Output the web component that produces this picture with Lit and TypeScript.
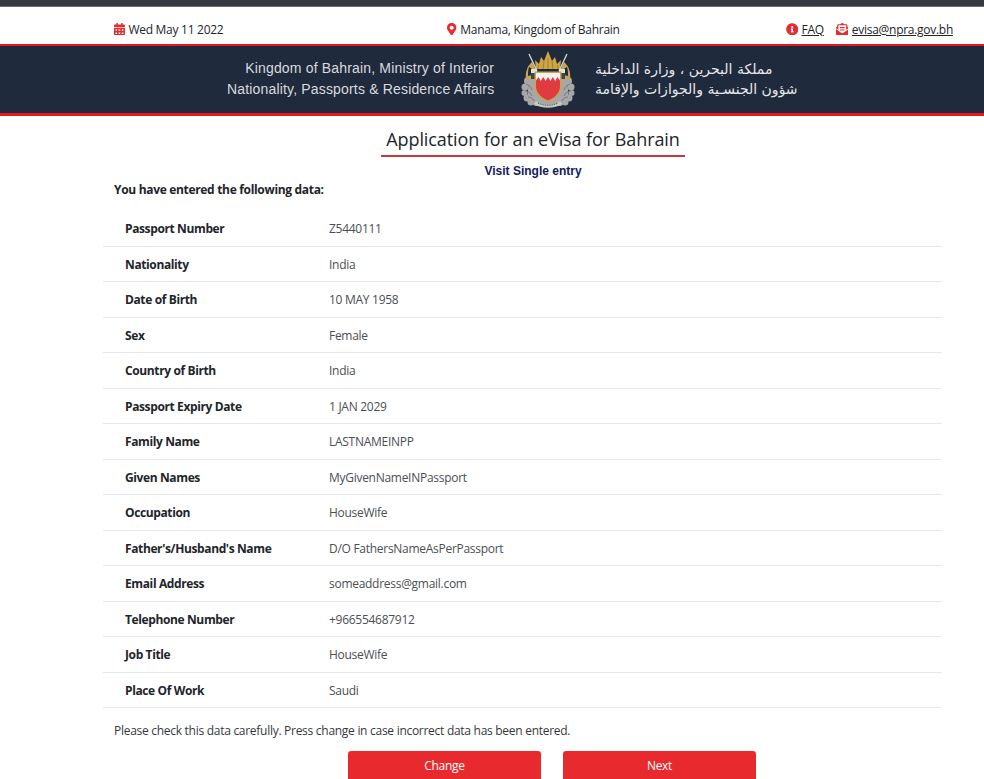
import { LitElement, html, css, svg } from "lit";
import { customElement } from "lit/decorators.js";

const rows: [string, string][] = [
  ["Passport Number", "Z5440111"],
  ["Nationality", "India"],
  ["Date of Birth", "10 MAY 1958"],
  ["Sex", "Female"],
  ["Country of Birth", "India"],
  ["Passport Expiry Date", "1 JAN 2029"],
  ["Family Name", "LASTNAMEINPP"],
  ["Given Names", "MyGivenNameINPassport"],
  ["Occupation", "HouseWife"],
  ["Father's/Husband's Name", "D/O FathersNameAsPerPassport"],
  ["Email Address", "someaddress@gmail.com"],
  ["Telephone Number", "+966554687912"],
  ["Job Title", "HouseWife"],
  ["Place Of Work", "Saudi"],
];

const calendar = svg`<path d="M0 464c0 26.5 21.5 48 48 48h352c26.5 0 48-21.5 48-48V192H0v272zm320-196c0-6.6 5.4-12 12-12h40c6.6 0 12 5.4 12 12v40c0 6.6-5.4 12-12 12h-40c-6.6 0-12-5.4-12-12v-40zm0 128c0-6.6 5.4-12 12-12h40c6.6 0 12 5.4 12 12v40c0 6.6-5.4 12-12 12h-40c-6.6 0-12-5.4-12-12v-40zM192 268c0-6.6 5.4-12 12-12h40c6.6 0 12 5.4 12 12v40c0 6.6-5.4 12-12 12h-40c-6.6 0-12-5.4-12-12v-40zm0 128c0-6.6 5.4-12 12-12h40c6.6 0 12 5.4 12 12v40c0 6.6-5.4 12-12 12h-40c-6.6 0-12-5.4-12-12v-40zM64 268c0-6.6 5.4-12 12-12h40c6.6 0 12 5.4 12 12v40c0 6.6-5.4 12-12 12H76c-6.6 0-12-5.4-12-12v-40zm0 128c0-6.6 5.4-12 12-12h40c6.6 0 12 5.4 12 12v40c0 6.6-5.4 12-12 12H76c-6.6 0-12-5.4-12-12v-40zM400 64h-48V16c0-8.8-7.2-16-16-16h-32c-8.8 0-16 7.2-16 16v48H160V16c0-8.8-7.2-16-16-16h-32c-8.8 0-16 7.2-16 16v48H48C21.5 64 0 85.5 0 112v48h448v-48c0-26.5-21.5-48-48-48z"/>`;
const marker = svg`<path d="M172.268 501.67C26.97 291.031 0 262.562 0 192 0 85.961 85.961 0 192 0s192 85.961 192 192c0 70.562-26.97 99.031-172.268 309.67-9.535 13.774-29.93 13.773-39.464 0zM192 272c44.183 0 80-35.817 80-80s-35.817-80-80-80-80 35.817-80 80 35.817 80 80 80z"/>`;
const info = svg`<path d="M256 8C119.043 8 8 119.083 8 256c0 136.997 111.043 248 248 248s248-111.003 248-248C504 119.083 392.957 8 256 8zm0 110c23.196 0 42 18.804 42 42s-18.804 42-42 42-42-18.804-42-42 18.804-42 42-42zm56 254c0 6.627-5.373 12-12 12h-88c-6.627 0-12-5.373-12-12v-24c0-6.627 5.373-12 12-12h12v-64h-12c-6.627 0-12-5.373-12-12v-24c0-6.627 5.373-12 12-12h64c6.627 0 12 5.373 12 12v100h12c6.627 0 12 5.373 12 12v24z"/>`;
const envelope = svg`<path d="M176 216h160c8.84 0 16-7.16 16-16v-16c0-8.84-7.16-16-16-16H176c-8.84 0-16 7.16-16 16v16c0 8.84 7.16 16 16 16zm-16 80c0 8.84 7.16 16 16 16h160c8.84 0 16-7.16 16-16v-16c0-8.84-7.16-16-16-16H176c-8.84 0-16 7.16-16 16v16zm96 121.13c-16.42 0-32.84-5.06-46.86-15.19L0 250.86V464c0 26.51 21.49 48 48 48h416c26.51 0 48-21.49 48-48V250.86L302.86 401.94c-14.02 10.12-30.44 15.19-46.86 15.19zm237.61-254.18c-8.85-6.94-17.24-13.47-29.61-22.81V96c0-26.51-21.49-48-48-48h-77.55c-3.04-2.2-5.87-4.26-9.04-6.56C312.6 29.17 279.2-.35 256 0c-23.2-.35-56.59 29.17-73.41 41.44-3.17 2.3-6 4.36-9.04 6.56H96c-26.51 0-48 21.49-48 48v44.14c-12.37 9.33-20.76 15.87-29.61 22.81A47.995 47.995 0 0 0 0 200.72v10.65l96 69.35V96h320v184.72l96-69.35v-10.65c0-14.74-6.78-28.67-18.39-37.77z"/>`;

const emblem = svg`
  <svg class="emblem" viewBox="0 0 54 58" aria-hidden="true">
    <g fill="#a6a7a6">
      <circle cx="7" cy="30" r="4"/><circle cx="4" cy="36" r="3.500"/><circle cx="3.500" cy="42" r="3"/><circle cx="6" cy="47" r="3.500"/><circle cx="10" cy="51" r="3.500"/>
      <circle cx="47" cy="30" r="4"/><circle cx="50" cy="36" r="3.500"/><circle cx="50.500" cy="42" r="3"/><circle cx="48" cy="47" r="3.500"/><circle cx="44" cy="51" r="3.500"/>
      <path d="M8 27h38l2 22-8 6H14l-8-6z"/>
    </g>
    <g fill="none" stroke="#6d7076" stroke-width="0.800">
      <path d="M5 33c3 1 5 3 6 6M4 40c3 0 6 2 7 5M7 46c2 0 5 1 6 4"/>
      <path d="M49 33c-3 1-5 3-6 6M50 40c-3 0-6 2-7 5M47 46c-2 0-5 1-6 4"/>
    </g>
    <path d="M11 11C6 15 4 22 5 29l7-1 4-6z" fill="#c9a650"/>
    <path d="M43 11c5 4 7 11 6 18l-7-1-4-6z" fill="#c9a650"/>
    <path d="M8 16c-1 3-1 6-1 9l4-1 2-5z" fill="#1f2a3d"/>
    <path d="M46 16c1 3 1 6 1 9l-4-1-2-5z" fill="#1f2a3d"/>
    <path d="M15 18l-1-9 4 4 2-7 3 4 4-10 4 10 3-4 2 7 4-4-1 9z" fill="#cfa644"/>
    <path d="M17 18l.500-4M22 18l1-8M27 18V7M32 18l-1-8M37 18l-.500-4" stroke="#8a6d26" stroke-width="0.700" fill="none"/>
    <path d="M8 3l8 17M46 3L38 20" stroke="#d2d2cf" stroke-width="1.400" fill="none"/>
    <path d="M10 18h6v4h-6zM38 18h6v4h-6z" fill="#e2e2dd"/>
    <path d="M10 22h5v6h-5zM39 22h5v6h-5z" fill="#3f454f"/>
    <path d="M13.500 20.500h27v14.500c0 8-6 13-13.500 16-7.500-3-13.500-8-13.500-16z" fill="#c9a650"/>
    <path d="M15 22h24v13c0 7-5 11.500-12 14.500-7-3-12-7.500-12-14.500z" fill="#df3b41"/>
    <path d="M15 22h24v7.500l-2.400-3.500-2.400 4-2.400-4-2.400 4-2.400-4-2.400 4-2.400-4-2.400 4-2.400-4-2.400 3.500z" fill="#f7f2ef"/>
    <path d="M15 50c6 5 18 5 24 0l2 3c-7 5-21 5-28 0z" fill="#c7c7c4"/>
    <path d="M17 52c6 3 14 3 20 0" stroke="#3b3f46" stroke-width="0.800" stroke-dasharray="1.500 .8" fill="none"/>
  </svg>`;

@customElement("app-root")
export class AppRoot extends LitElement {
  static styles = css`
    :host {
      display: block;
      height: 779px;
      overflow: hidden;
      background: #fff;
      color: #212529;
      font-family: "Open Sans", "Noto Sans", sans-serif;
      font-size: 12px;
      letter-spacing: -0.28px;
    }
    .chrome {
      height: 7px;
      background: #343a40;
      box-shadow: inset 0 -1px 0 #6b6e72;
    }
    .topbar {
      height: 37px;
      margin: 0 31px 0 114px;
      display: grid;
      grid-template-columns: 1fr auto 1fr;
      align-items: center;
      padding-top: 7px;
      box-sizing: border-box;
    }
    .item {
      display: inline-flex;
      align-items: center;
      gap: 3.5px;
    }
    .right {
      justify-self: end;
      display: flex;
      gap: 12px;
    }
    .ico {
      height: 12.5px;
      fill: #e62c2f;
      display: block;
    }
    a {
      color: #212529;
      text-decoration: underline;
    }
    .banner {
      height: 67px;
      background: #1f2a3d;
      border-top: 2px solid #e5161c;
      border-bottom: 3px solid #e5161c;
      display: flex;
      align-items: center;
      padding-left: 227px;
    }
    .en {
      width: 267px;
      text-align: right;
      font-family: "Liberation Sans", Arial, sans-serif;
      font-size: 14px;
      letter-spacing: 0.17px;
      line-height: 21px;
      color: #d9dade;
      white-space: nowrap;
      margin-top: -2px;
    }
    .emblem {
      width: 54px;
      height: 58px;
      margin: 0 20px 0 27px;
      flex: none;
    }
    .ar {
      font-family: "DejaVu Sans", sans-serif;
      font-size: 14px;
      letter-spacing: 0;
      line-height: 20px;
      color: #e6e6e8;
      text-align: left;
      white-space: nowrap;
      margin-top: -2px;
    }
    .main {
      padding: 0 42px 0 103px;
    }
    .head {
      width: 304px;
      margin: 8px 0 0 278px;
    }
    h1 {
      margin: 0;
      font-size: 18px;
      font-weight: 400;
      letter-spacing: -0.08px;
      line-height: 30px;
      padding-bottom: 1px;
      text-align: center;
      color: #212529;
      border-bottom: 2px solid #c8373b;
      white-space: nowrap;
    }
    .sub {
      margin: 6px 0 0;
      text-align: center;
      font-family: "Liberation Sans", Arial, sans-serif;
      font-weight: 700;
      font-size: 12px;
      letter-spacing: 0;
      line-height: 16px;
      color: #10205a;
      white-space: nowrap;
    }
    .lead {
      margin: 2px 0 0 11px;
      font-weight: 700;
      letter-spacing: -0.32px;
      line-height: 17px;
      color: #212529;
    }
    .table {
      margin-top: 13px;
    }
    .row {
      height: 35.5px;
      box-sizing: border-box;
      border-bottom: 1px solid #e6e7e8;
      padding-top: 1px;
      display: grid;
      grid-template-columns: 226px 1fr;
      align-items: center;
    }
    .k {
      padding-left: 22px;
      font-weight: 700;
      letter-spacing: -0.38px;
    }
    .v {
      color: #4a4f54;
    }
    .note {
      margin: 14px 0 0 11px;
      line-height: 17px;
      color: #34393e;
    }
    .actions {
      display: flex;
      gap: 22px;
      margin-top: 12px;
      padding-left: 245px;
    }
    button {
      width: 193px;
      height: 34px;
      border: 0;
      border-radius: 3px;
      background: #e82a2e;
      color: #fff;
      font: inherit;
      letter-spacing: inherit;
      padding: 0 0 6px;
    }
  `;

  render() {
    return html`
      <div class="chrome"></div>
      <div class="topbar">
        <span class="item"><svg class="ico" viewBox="0 0 448 512">${calendar}</svg>Wed May 11 2022</span>
        <span class="item"><svg class="ico" viewBox="0 0 384 512">${marker}</svg>Manama, Kingdom of Bahrain</span>
        <div class="right">
          <span class="item"><svg class="ico" viewBox="0 0 512 512">${info}</svg><a href="#">FAQ</a></span>
          <span class="item"><svg class="ico" viewBox="0 0 512 512">${envelope}</svg><a href="#">evisa@npra.gov.bh</a></span>
        </div>
      </div>
      <header class="banner">
        <div class="en">Kingdom of Bahrain, Ministry of Interior<br />Nationality, Passports &amp; Residence Affairs</div>
        ${emblem}
        <div class="ar" dir="rtl" lang="ar">مملكة البحرين ، وزارة الداخلية<br />شؤون الجنسـية والجوازات والإقامة</div>
      </header>
      <main class="main">
        <div class="head">
          <h1>Application for an eVisa for Bahrain</h1>
          <p class="sub">Visit Single entry</p>
        </div>
        <div class="lead">You have entered the following data:</div>
        <div class="table">
          ${rows.map(
            ([k, v]) => html`<div class="row"><div class="k">${k}</div><div class="v">${v}</div></div>`
          )}
        </div>
        <div class="note">Please check this data carefully. Press change in case incorrect data has been entered.</div>
        <div class="actions">
          <button>Change</button>
          <button>Next</button>
        </div>
      </main>
    `;
  }
}
